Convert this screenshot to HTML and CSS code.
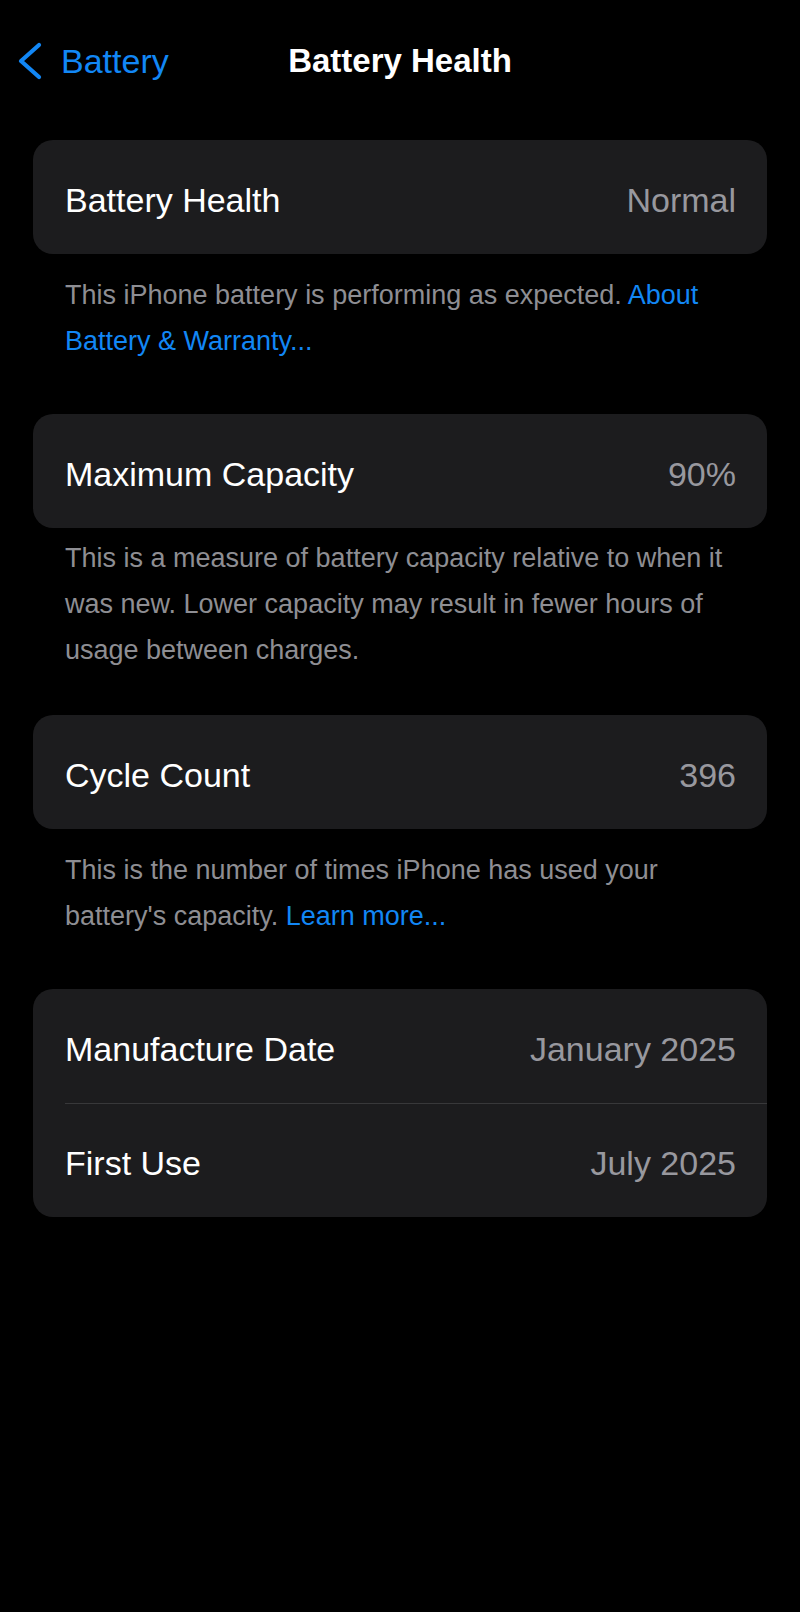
FILE: index.html
```html
<!DOCTYPE html>
<html lang="en">
<head>
<meta charset="utf-8">
<title>Battery Health</title>
<link rel="stylesheet" href="styles.css">
</head>
<body>
<header class="nav">
  <a class="back" href="#">
    <svg class="chevron" width="26" height="40" viewBox="0 0 26 40" aria-hidden="true">
      <polyline points="22,4 4,20 22,36" fill="none" stroke="currentColor" stroke-width="4.2" stroke-linecap="round" stroke-linejoin="round"/>
    </svg>
    <span>Battery</span>
  </a>
  <h1 class="title">Battery Health</h1>
  <div></div>
</header>

<main class="content">
  <section class="group">
    <div class="card">
      <div class="row"><span class="label">Battery Health</span><span class="value">Normal</span></div>
    </div>
    <p class="footer">This iPhone battery is performing as expected. <a class="link" href="#">About Battery &amp; Warranty...</a></p>
  </section>

  <section class="group">
    <div class="card">
      <div class="row"><span class="label">Maximum Capacity</span><span class="value">90%</span></div>
    </div>
    <p class="footer footer-tight">This is a measure of battery capacity relative to when it was new. Lower capacity may result in fewer hours of usage between charges.</p>
  </section>

  <section class="group">
    <div class="card">
      <div class="row"><span class="label">Cycle Count</span><span class="value">396</span></div>
    </div>
    <p class="footer">This is the number of times iPhone has used your battery's capacity. <a class="link" href="#">Learn more...</a></p>
  </section>

  <section class="group">
    <div class="card">
      <div class="row"><span class="label">Manufacture Date</span><span class="value">January 2025</span></div>
      <div class="row"><span class="label">First Use</span><span class="value">July 2025</span></div>
    </div>
  </section>
</main>
</body>
</html>
```

FILE: styles.css
```css
* { box-sizing: border-box; }

html, body {
  margin: 0;
  padding: 0;
  background: #000;
}

body {
  font-family: "Liberation Sans", Arial, sans-serif;
  color: #fff;
  min-height: 1612px;
}

.nav {
  display: grid;
  grid-template-columns: 1fr auto 1fr;
  align-items: center;
  padding: 41px 0 0 17px;
  height: 81px;
}

.back {
  display: flex;
  align-items: center;
  gap: 18px;
  color: #1287f5;
  text-decoration: none;
  font-size: 34px;
  line-height: 40px;
}

.chevron {
  display: block;
  flex: none;
}

.title {
  margin: 0;
  font-size: 33px;
  font-weight: 700;
  line-height: 40px;
  color: #fff;
  white-space: nowrap;
  margin-left: -17px;
}

.content {
  padding: 59px 33px 0;
}

.card {
  background: #1c1c1e;
  border-radius: 20px;
  overflow: hidden;
}

.row {
  display: flex;
  justify-content: space-between;
  padding: 40px 31px 34px 32px;
  font-size: 34px;
  line-height: 40px;
}

.row + .row {
  background: linear-gradient(#38383a, #38383a) 32px 0 / 100% 1px no-repeat;
}

.label { color: #fff; }

.value { color: #98989e; }

.footer {
  margin: 0;
  padding: 18px 32px 50px;
  font-size: 27px;
  line-height: 46px;
  color: #8e8e93;
}

.footer-tight {
  padding-top: 7px;
  padding-bottom: 42px;
}

.link {
  color: #1287f5;
  text-decoration: none;
}
```
